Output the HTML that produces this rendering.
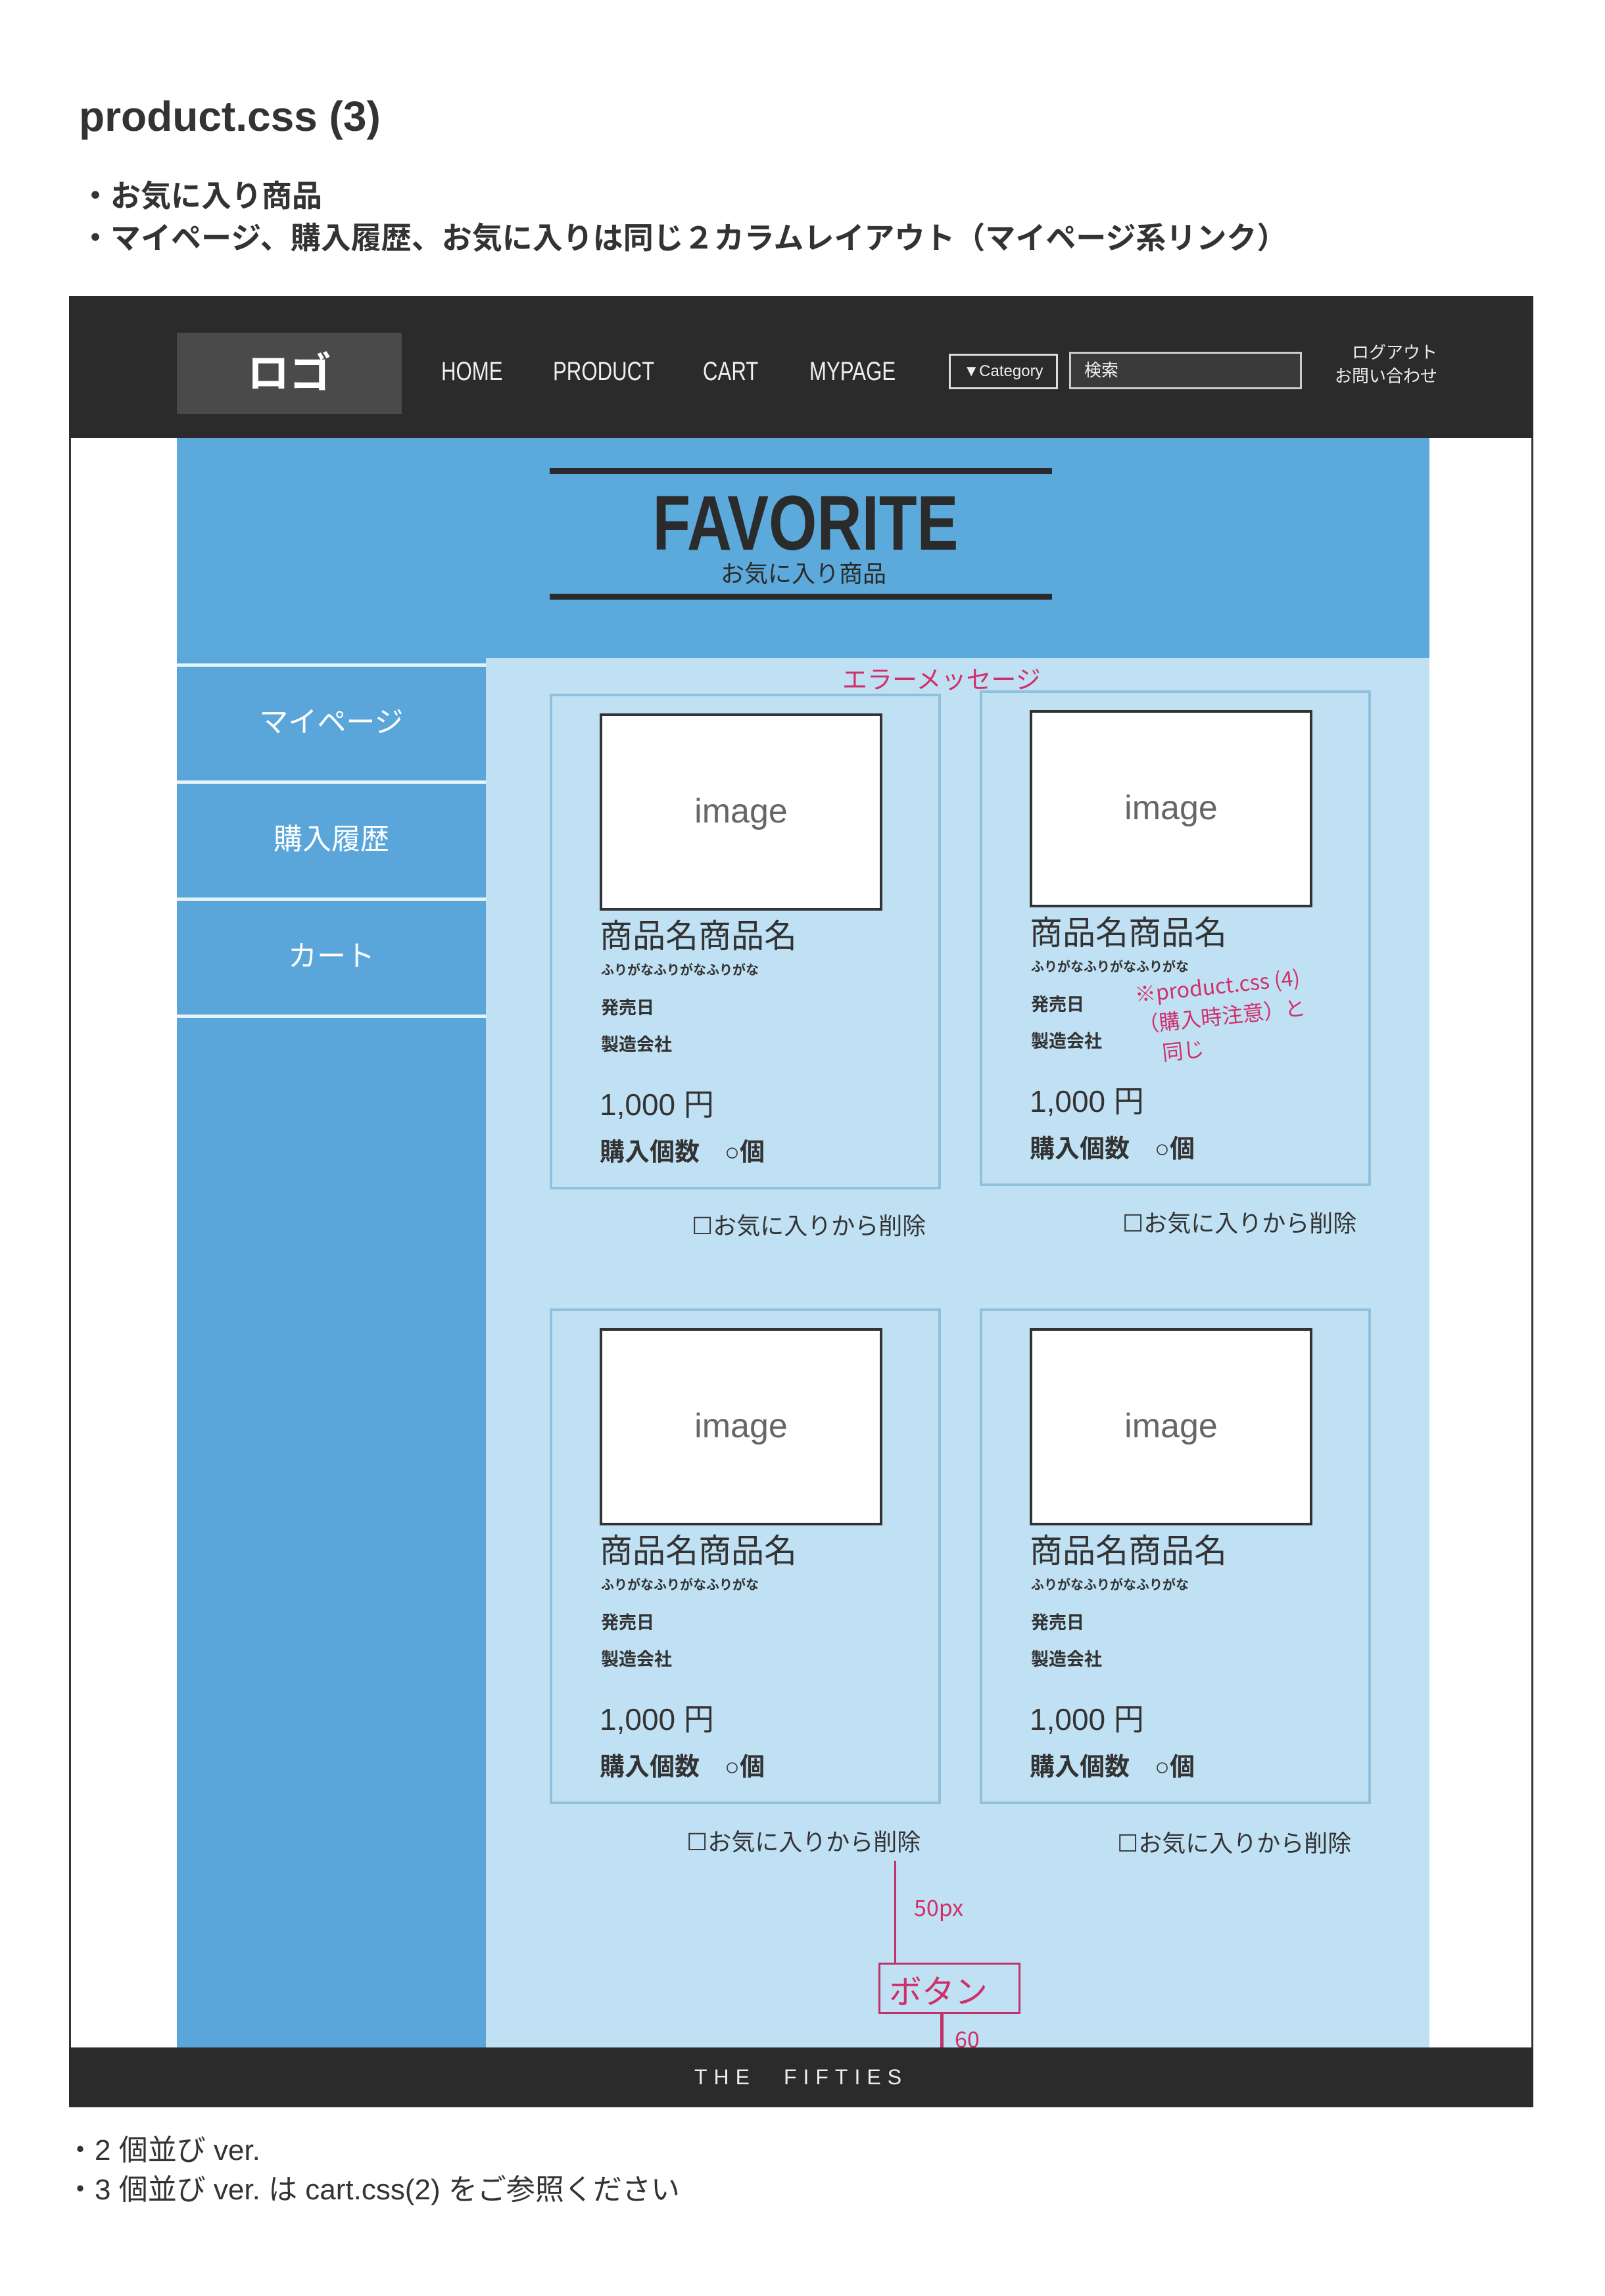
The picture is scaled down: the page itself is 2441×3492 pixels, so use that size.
<!DOCTYPE html>
<html><head><meta charset="utf-8"><style>
*{margin:0;padding:0;box-sizing:border-box}
body{width:2441px;height:3492px;background:#fff;position:relative;overflow:hidden;font-family:"Liberation Sans","Noto Sans CJK JP",sans-serif;color:#222}
.a{position:absolute;white-space:nowrap}
.nav{color:#eee;font-size:40px;top:543px;transform:scaleX(.78);transform-origin:left}
.card{position:absolute;border:4px solid #8fc0dc;width:595px;height:754px}
.img{position:absolute;left:72px;top:26px;width:430px;height:300px;background:#fff;border:4px solid #333;text-align:center;line-height:290px;font-size:52px;color:#666}
.nm{position:absolute;left:72px;top:325px;font-size:50px;color:#333}
.fu{position:absolute;left:74px;top:400px;font-size:20px;font-weight:bold;color:#333}
.sm{position:absolute;left:74px;font-size:27px;font-weight:bold;color:#333}
.pr{position:absolute;left:72px;top:585px;font-size:46px;color:#333}
.qt{position:absolute;left:72px;top:662px;font-size:38px;font-weight:bold;color:#333}
.del{position:absolute;font-size:36px;color:#333}
.side{position:absolute;left:269px;width:470px;height:174px;border-top:5px solid #e8f4fc;color:#fff;font-size:44px;text-align:center;line-height:170px}
.red{color:#d0306a;font-family:"Noto Sans CJK JP",sans-serif;position:absolute;white-space:nowrap}
</style></head><body>
<div class="a" style="left:120px;top:140px;font-size:64px;font-weight:600;color:#333">product.css (3)</div>
<div class="a" style="left:122px;top:262px;font-size:46px;font-weight:bold;color:#333">・お気に入り商品</div>
<div class="a" style="left:122px;top:326px;font-size:46px;font-weight:bold;color:#333">・マイページ、購入履歴、お気に入りは同じ２カラムレイアウト（マイページ系リンク）</div>

<div class="a" style="left:105px;top:455px;width:2227px;height:2750px;border:3px solid #333;border-top:none;background:#fff"></div>
<div class="a" style="left:105px;top:450px;width:2227px;height:216px;background:#2b2b2b"></div>
<div class="a" style="left:269px;top:506px;width:342px;height:124px;background:#4a4a4a;color:#fff;font-size:64px;text-align:center;line-height:124px;font-weight:bold">ロゴ</div>
<div class="a nav" style="left:671px">HOME</div>
<div class="a nav" style="left:841px">PRODUCT</div>
<div class="a nav" style="left:1069px">CART</div>
<div class="a nav" style="left:1231px">MYPAGE</div>
<div class="a" style="left:1443px;top:538px;width:166px;height:54px;border:3px solid #ddd;color:#eee;font-size:24px;line-height:48px;text-align:center">▼Category</div>
<div class="a" style="left:1626px;top:535px;width:354px;height:57px;border:3px solid #ccc;background:#3a3a3a;color:#eee;font-size:26px;line-height:50px;padding-left:20px">検索</div>
<div class="a" style="left:2030px;top:518px;color:#eee;font-size:26px;line-height:36px;text-align:right">ログアウト<br>お問い合わせ</div>

<div class="a" style="left:269px;top:666px;width:1905px;height:335px;background:#5ca9dc"></div>
<div class="a" style="left:836px;top:712px;width:764px;height:9px;background:#2b2b2b"></div>
<div class="a" style="left:836px;top:903px;width:764px;height:9px;background:#2b2b2b"></div>
<div class="a" style="left:1225px;top:728px;font-size:118px;font-weight:bold;color:#2b2b2b;transform:translateX(-50%) scaleX(.8)">FAVORITE</div>
<div class="a" style="left:1222px;top:844px;font-size:36px;color:#2b2b2b;transform:translateX(-50%)">お気に入り商品</div>

<div class="a" style="left:269px;top:1001px;width:470px;height:2113px;background:#5aa6da"></div>
<div class="a" style="left:739px;top:1001px;width:1435px;height:2113px;background:#c0e1f4"></div>
<div class="side" style="top:1009px">マイページ</div>
<div class="side" style="top:1187px">購入履歴</div>
<div class="side" style="top:1365px;border-bottom:5px solid #e8f4fc;height:183px">カート</div>

<div class="red" style="left:1281px;top:1003px;font-size:38px">エラーメッセージ</div>

<div class="card" style="left:836px;top:1055px"><div class="img">image</div><div class="nm">商品名商品名</div><div class="fu">ふりがなふりがなふりがな</div><div class="sm" style="top:452px">発売日</div><div class="sm" style="top:508px">製造会社</div><div class="pr">1,000 円</div><div class="qt">購入個数　○個</div></div>
<div class="card" style="left:1490px;top:1050px"><div class="img">image</div><div class="nm">商品名商品名</div><div class="fu">ふりがなふりがなふりがな</div><div class="sm" style="top:452px">発売日</div><div class="sm" style="top:508px">製造会社</div><div class="pr">1,000 円</div><div class="qt">購入個数　○個</div></div>
<div class="card" style="left:836px;top:1990px"><div class="img">image</div><div class="nm">商品名商品名</div><div class="fu">ふりがなふりがなふりがな</div><div class="sm" style="top:452px">発売日</div><div class="sm" style="top:508px">製造会社</div><div class="pr">1,000 円</div><div class="qt">購入個数　○個</div></div>
<div class="card" style="left:1490px;top:1990px"><div class="img">image</div><div class="nm">商品名商品名</div><div class="fu">ふりがなふりがなふりがな</div><div class="sm" style="top:452px">発売日</div><div class="sm" style="top:508px">製造会社</div><div class="pr">1,000 円</div><div class="qt">購入個数　○個</div></div>

<div class="del" style="left:1052px;top:1836px">☐お気に入りから削除</div>
<div class="del" style="left:1707px;top:1832px">☐お気に入りから削除</div>
<div class="del" style="left:1044px;top:2773px">☐お気に入りから削除</div>
<div class="del" style="left:1699px;top:2775px">☐お気に入りから削除</div>

<div class="red" style="left:1730px;top:1475px;font-size:32px;line-height:46px;transform:rotate(-6deg)">※product.css (4)<br>（購入時注意）と<br>　同じ</div>
<div class="a" style="left:1360px;top:2830px;width:3px;height:155px;background:#c0306a"></div>
<div class="red" style="left:1390px;top:2875px;font-size:34px">50px</div>
<div class="a" style="left:1336px;top:2985px;width:216px;height:78px;border:3px solid #c0306a"></div>
<div class="red" style="left:1352px;top:2990px;font-size:50px">ボタン</div>
<div class="a" style="left:1430px;top:3063px;width:5px;height:55px;background:#c0306a"></div>
<div class="red" style="left:1452px;top:3075px;font-size:34px">60</div>

<div class="a" style="left:105px;top:3114px;width:2227px;height:91px;background:#2b2b2b;color:#eee;font-size:32px;text-align:center;line-height:91px;letter-spacing:10px">THE　FIFTIES</div>

<div class="a" style="left:100px;top:3234px;font-size:44px;color:#333">・2 個並び ver.</div>
<div class="a" style="left:100px;top:3294px;font-size:44px;color:#333">・3 個並び ver. は cart.css(2) をご参照ください</div>
</body></html>
